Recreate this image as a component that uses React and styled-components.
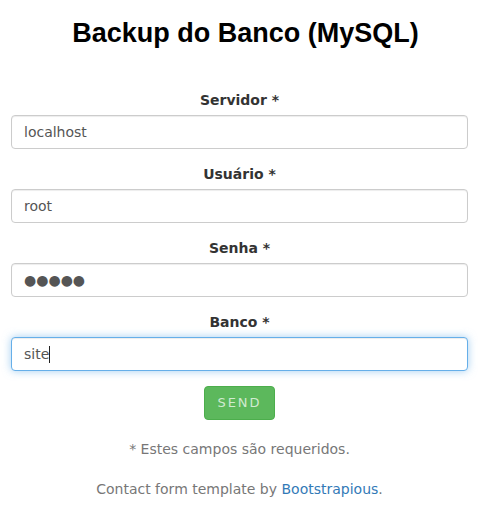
import React, { useEffect, useState } from "react";
import styled, { createGlobalStyle, css } from "styled-components";

const GlobalStyle = createGlobalStyle`
  * { box-sizing: border-box; }
  body {
    margin: 0;
    background: #fff;
    font-family: "DejaVu Sans", Verdana, sans-serif;
    font-size: 14px;
    line-height: 1.42857;
    color: #333;
  }
`;

const Page = styled.div`
  text-align: center;
`;

const Title = styled.h1`
  margin: 17px 0 41px;
  padding-left: 5px;
  font-family: "Liberation Sans", Arial, sans-serif;
  font-size: 27px;
  font-weight: 700;
  line-height: 32px;
  color: #000;
`;

const Content = styled.div`
  padding: 0 18px 0 11px;
`;

const Form = styled.form`
  display: flex;
  flex-direction: column;
  align-items: center;
`;

const Group = styled.div`
  width: 100%;
  display: flex;
  flex-direction: column;
  margin-bottom: 15px;
`;

const Label = styled.label`
  display: block;
  margin-bottom: 5px;
  font-weight: 700;
  line-height: 20px;
  color: #333;
`;

const Field = styled.div`
  position: relative;
`;

const Input = styled.input`
  display: block;
  width: 100%;
  height: 34px;
  padding: 6px 12px;
  font-family: "DejaVu Sans", Verdana, sans-serif;
  font-size: 14px;
  line-height: 1.42857;
  color: #555;
  caret-color: transparent;
  background: #fff;
  border: 1px solid #ccc;
  border-radius: 4px;
  box-shadow: inset 0 1px 1px rgba(0, 0, 0, 0.075);
  outline: none;
  ${(p) =>
    p.$active &&
    css`
      border-color: #66afe9;
      box-shadow: inset 0 1px 1px rgba(0, 0, 0, 0.075),
        0 0 8px rgba(102, 175, 233, 0.6);
    `}
`;

const Caret = styled.span`
  position: absolute;
  top: 9px;
  width: 1px;
  height: 17px;
  background: #222;
  pointer-events: none;
`;

const SendButton = styled.button`
  padding: 6px 12px;
  font-family: "DejaVu Sans", Verdana, sans-serif;
  font-size: 13px;
  line-height: 20px;
  letter-spacing: 2px;
  color: rgba(255, 255, 255, 0.72);
  background: #5cb85c;
  border: 1px solid #4cae4c;
  border-radius: 4px;
  cursor: pointer;
`;

const Note = styled.p`
  margin: ${(p) => p.$top}px 0 0;
  line-height: 20px;
  color: #777;
`;

const Link = styled.a`
  color: #337ab7;
  text-decoration: none;
`;

const fields = [
  { id: "servidor", label: "Servidor *", value: "localhost" },
  { id: "usuario", label: "Usuário *", value: "root" },
  { id: "senha", label: "Senha *", value: "●●●●●" },
  { id: "banco", label: "Banco *", value: "site", active: true },
];

function measure(text) {
  const ctx = document.createElement("canvas").getContext("2d");
  ctx.font = '14px "DejaVu Sans"';
  return ctx.measureText(text).width;
}

export default function App() {
  const [caretLeft, setCaretLeft] = useState(null);

  useEffect(() => {
    const run = () => setCaretLeft(13 + Math.round(measure("site")));
    if (document.fonts && document.fonts.ready) document.fonts.ready.then(run);
    else run();
  }, []);

  return (
    <Page>
      <GlobalStyle />
      <Title>Backup do Banco (MySQL)</Title>
      <Content>
        <Form onSubmit={(e) => e.preventDefault()}>
          {fields.map((f) => (
            <Group key={f.id}>
              <Label htmlFor={f.id}>{f.label}</Label>
              <Field>
                <Input id={f.id} type="text" defaultValue={f.value} $active={f.active} />
                {f.active && caretLeft !== null && <Caret style={{ left: caretLeft }} />}
              </Field>
            </Group>
          ))}
          <SendButton type="submit">SEND</SendButton>
        </Form>
        <Note $top={19}>* Estes campos são requeridos.</Note>
        <Note $top={20}>
          Contact form template by <Link href="#">Bootstrapious</Link>.
        </Note>
      </Content>
    </Page>
  );
}
